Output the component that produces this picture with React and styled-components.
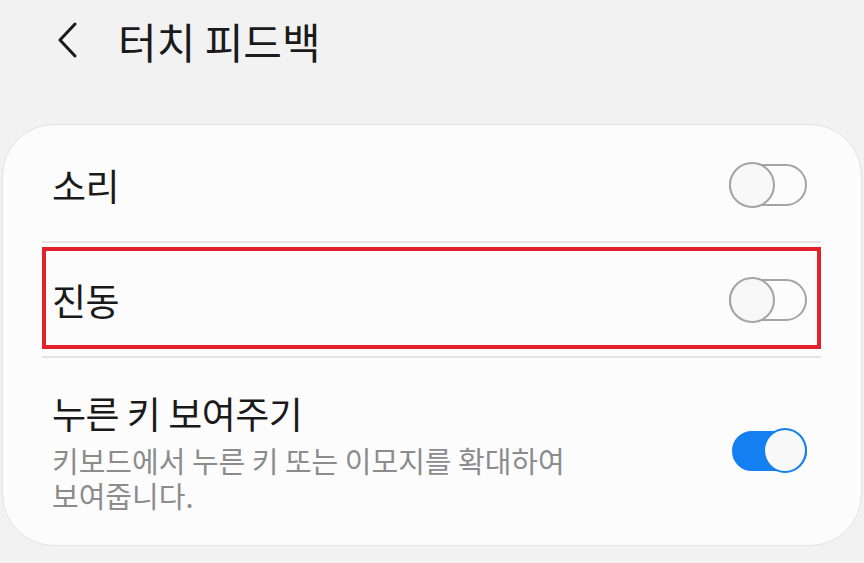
import React from 'react';
import styled, { createGlobalStyle } from 'styled-components';

const GlobalStyle = createGlobalStyle`
  html, body {
    margin: 0;
    padding: 0;
    background: #f2f2f2;
  }
  body {
    font-family: "Noto Sans CJK KR", "Noto Sans", sans-serif;
    color: #1c1c1c;
  }
`;

const Page = styled.div`
  width: 864px;
  height: 563px;
  overflow: hidden;
  background: #f2f2f2;
  display: flex;
  flex-direction: column;
`;

const Header = styled.header`
  height: 124px;
  display: flex;
  align-items: flex-start;
  padding: 12px 0 0 52px;
  box-sizing: border-box;
`;

const BackButton = styled.button`
  width: 30px;
  height: 40px;
  margin-top: 8px;
  padding: 0;
  border: none;
  background: none;
  display: flex;
  align-items: center;
  justify-content: center;
`;

const Title = styled.h1`
  margin: 0 0 0 36px;
  font-size: 42px;
  font-weight: 400;
  line-height: 58px;
  letter-spacing: 0;
  color: #1a1a1a;
`;

const Card = styled.section`
  margin: 0 2px;
  height: 422px;
  box-sizing: border-box;
  background: #fcfcfc;
  border: 1px solid #e2e2e2;
  border-radius: 52px;
  padding: 3px 40px 0 39px;
  display: flex;
  flex-direction: column;
`;

const Row = styled.div`
  position: relative;
  display: flex;
  align-items: center;
  justify-content: space-between;
  height: ${({ $height }) => $height}px;
  padding: 0 14px 0 10px;
  box-sizing: border-box;

  ${({ $highlight }) =>
    $highlight &&
    `
    &::after {
      content: '';
      position: absolute;
      left: 0;
      right: 0;
      top: 4px;
      bottom: 7px;
      border: 4px solid #e3202c;
      pointer-events: none;
    }
  `}
`;

const Divider = styled.div`
  height: 2px;
  background: #e4e4e4;
`;

const TextBlock = styled.div`
  display: flex;
  flex-direction: column;
`;

const Label = styled.span`
  font-size: 37px;
  line-height: 46px;
  letter-spacing: -0.5px;
  color: #1a1a1a;
`;

const Summary = styled.span`
  margin-top: 7px;
  width: 540px;
  font-size: 29px;
  line-height: 35px;
  letter-spacing: 0;
  color: #8c8c8c;
`;

const Switch = styled.div`
  position: relative;
  flex: none;
  width: 78px;
  height: 46px;
`;

const Track = styled.div`
  position: absolute;
  left: ${({ $on }) => ($on ? 3 : 0)}px;
  right: 0;
  top: ${({ $on }) => ($on ? 3 : 2)}px;
  bottom: ${({ $on }) => ($on ? 3 : 2)}px;
  box-sizing: border-box;
  border-radius: 21px;
  border: 2px solid ${({ $on }) => ($on ? '#147ff0' : '#a4a4a4')};
  background: ${({ $on }) => ($on ? '#147ff0' : 'transparent')};
`;

const Thumb = styled.div`
  position: absolute;
  top: 0;
  ${({ $on }) => ($on ? 'right: 0;' : 'left: 0;')}
  width: ${({ $on }) => ($on ? 44 : 46)}px;
  height: ${({ $on }) => ($on ? 45 : 46)}px;
  box-sizing: border-box;
  border-radius: 50%;
  border: 2px solid ${({ $on }) => ($on ? '#147ff0' : '#a4a4a4')};
  background: #f8f8f8;
`;

const Toggle = ({ on }) => (
  <Switch>
    <Track $on={on} />
    <Thumb $on={on} />
  </Switch>
);

const settings = [
  { id: 'sound', label: '소리', on: false, height: 113, nudge: 0 },
  { id: 'vibrate', label: '진동', on: false, height: 113, highlight: true },
  {
    id: 'keys',
    label: '누른 키 보여주기',
    summary: '키보드에서 누른 키 또는 이모지를 확대하여 보여줍니다.',
    on: true,
    height: 186
  }
];

export default function App() {
  return (
    <Page>
      <GlobalStyle />
      <Header>
        <BackButton type="button" aria-label="뒤로">
          <svg width="24" height="36" viewBox="0 0 24 36" fill="none">
            <path
              d="M20 2 L5 18 L20 34"
              stroke="#1a1a1a"
              strokeWidth="3"
              strokeLinecap="round"
              strokeLinejoin="round"
            />
          </svg>
        </BackButton>
        <Title>터치 피드백</Title>
      </Header>
      <Card>
        {settings.map((item, i) => (
          <React.Fragment key={item.id}>
            {i > 0 && <Divider />}
            <Row $height={item.height} $highlight={item.highlight}>
              <TextBlock>
                <Label>{item.label}</Label>
                {item.summary && <Summary>{item.summary}</Summary>}
              </TextBlock>
              <Toggle on={item.on} />
            </Row>
          </React.Fragment>
        ))}
      </Card>
    </Page>
  );
}
